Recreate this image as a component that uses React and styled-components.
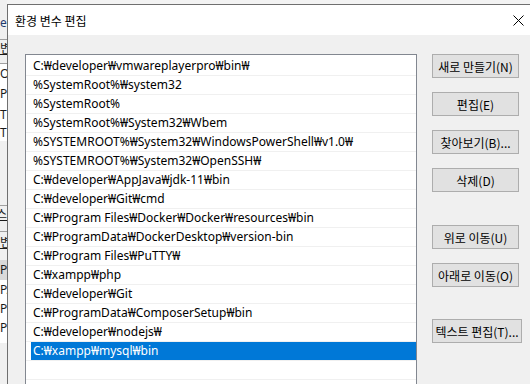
import React from "react";
import styled, { createGlobalStyle } from "styled-components";

const GlobalStyle = createGlobalStyle`
  html, body {
    margin: 0;
    padding: 0;
    background: #f3f3f3;
    font-family: "Noto Sans", "Noto Sans CJK KR", sans-serif;
  }
`;

const Screen = styled.div`
  width: 530px;
  height: 384px;
  display: flex;
  overflow: hidden;
  background: #f3f3f3;
`;

const BackWindow = styled.div`
  width: 7px;
  flex-shrink: 0;
  display: flex;
  flex-direction: column;
  overflow: hidden;
  background: #f0f0f0;
  font-size: 12px;
  color: #1a1a1a;
`;

const BackLine = styled.div`
  height: ${(p) => p.$h}px;
  line-height: ${(p) => p.$h}px;
  flex-shrink: 0;
  white-space: nowrap;
  box-sizing: border-box;
  background: ${(p) => p.$bg || "transparent"};
  border-bottom: ${(p) => (p.$rule ? "1px solid #a0a0a0" : "none")};
  text-decoration: ${(p) => (p.$under ? "underline" : "none")};
  color: ${(p) => p.$color || "inherit"};
  margin-left: ${(p) => p.$shift || 0}px;
`;

const Dialog = styled.div`
  width: 533px;
  flex-shrink: 0;
  margin-top: 4px;
  border-top: 1px solid #6f6f6f;
  border-left: 1px solid #6f6f6f;
  background: #f0f0f0;
  display: flex;
  flex-direction: column;
`;

const TitleBar = styled.div`
  height: 30px;
  background: #ffffff;
  display: flex;
  align-items: center;
  justify-content: space-between;
  padding-left: 7px;
`;

const Title = styled.span`
  font-family: "Noto Sans CJK KR", sans-serif;
  font-size: 12px;
  color: #000;
`;

const CloseButton = styled.div`
  width: 46px;
  height: 30px;
  flex-shrink: 0;
  display: flex;
  align-items: center;
  justify-content: center;
`;

const Body = styled.div`
  flex: 1;
  display: flex;
  align-items: flex-start;
  padding: 19px 0 0 17px;
`;

const ListBox = styled.div`
  width: 390px;
  height: 340px;
  border: 1px solid #828790;
  background: #ffffff;
  padding-top: 2px;
  flex-shrink: 0;
`;

const Row = styled.div`
  height: 18px;
  border-bottom: 1px solid #f0f0f0;
`;

const Cell = styled.div`
  height: 18px;
  margin-left: 5px;
  padding-left: 2px;
  line-height: 18px;
  font-size: 12px;
  white-space: nowrap;
  color: ${(p) => (p.$selected ? "#ffffff" : "#000000")};
  background: ${(p) => (p.$selected ? "#0078d7" : "transparent")};
`;

const ButtonColumn = styled.div`
  display: flex;
  flex-direction: column;
  margin-left: 15px;
`;

const Button = styled.div`
  width: ${(p) => p.$w || 85}px;
  height: 22px;
  margin-top: ${(p) => p.$gap || 0}px;
  border: 1px solid #adadad;
  background: #e1e1e1;
  display: flex;
  align-items: center;
  justify-content: center;
  font-family: "Noto Sans CJK KR", sans-serif;
  font-size: 12px;
  color: #000;
  white-space: nowrap;
`;

const paths = [
  "C:₩developer₩vmwareplayerpro₩bin₩",
  "%SystemRoot%₩system32",
  "%SystemRoot%",
  "%SystemRoot%₩System32₩Wbem",
  "%SYSTEMROOT%₩System32₩WindowsPowerShell₩v1.0₩",
  "%SYSTEMROOT%₩System32₩OpenSSH₩",
  "C:₩developer₩AppJava₩jdk-11₩bin",
  "C:₩developer₩Git₩cmd",
  "C:₩Program Files₩Docker₩Docker₩resources₩bin",
  "C:₩ProgramData₩DockerDesktop₩version-bin",
  "C:₩Program Files₩PuTTY₩",
  "C:₩xampp₩php",
  "C:₩developer₩Git",
  "C:₩ProgramData₩ComposerSetup₩bin",
  "C:₩developer₩nodejs₩",
  "C:₩xampp₩mysql₩bin",
  "",
];

const buttons = [
  { label: "새로 만들기(N)", gap: 0 },
  { label: "편집(E)", gap: 14 },
  { label: "찾아보기(B)...", gap: 14 },
  { label: "삭제(D)", gap: 14 },
  { label: "위로 이동(U)", gap: 33 },
  { label: "아래로 이동(O)", gap: 14 },
  { label: "텍스트 편집(T)...", gap: 32, w: 88 },
];

// the window behind the dialog, only its left sliver shows
const backLines = [
  { h: 14 },
  { h: 18, text: "er", color: "#1f3b6e" },
  { h: 8, rule: true },
  { h: 18, text: "변", under: true },
  { h: 6, rule: true },
  { h: 19, text: "Or", bg: "#ffffff" },
  { h: 22, text: "Pa", bg: "#ffffff" },
  { h: 19, text: "TE", bg: "#ffffff" },
  { h: 17, text: "TN", bg: "#ffffff" },
  { h: 59 },
  { h: 6, rule: true },
  { h: 18, text: "스", under: true, shift: -4 },
  { h: 8, rule: true },
  { h: 22, text: "변", under: true },
  { h: 6 },
  { h: 20, text: "Pa", bg: "#d9d9d9" },
  { h: 19, text: "PA", bg: "#ffffff" },
  { h: 19, text: "PR", bg: "#ffffff" },
  { h: 19, text: "PR", bg: "#ffffff" },
  { h: 6, bg: "#ffffff" },
];

export default function App() {
  return (
    <>
      <GlobalStyle />
      <Screen>
        <BackWindow>
          {backLines.map((l, i) => (
            <BackLine
              key={i}
              $h={l.h}
              $bg={l.bg}
              $rule={l.rule}
              $under={l.under}
              $color={l.color}
              $shift={l.shift}
            >
              {l.text}
            </BackLine>
          ))}
        </BackWindow>
        <Dialog>
          <TitleBar>
            <Title>환경 변수 편집</Title>
            <CloseButton>
              <svg width="11" height="11" viewBox="0 0 11 11">
                <path d="M0.5 0.5L10.5 10.5M10.5 0.5L0.5 10.5" stroke="#000" strokeWidth="1" />
              </svg>
            </CloseButton>
          </TitleBar>
          <Body>
            <ListBox>
              {paths.map((p, i) => (
                <Row key={i}>
                  <Cell $selected={i === 15}>{p}</Cell>
                </Row>
              ))}
            </ListBox>
            <ButtonColumn>
              {buttons.map((b) => (
                <Button key={b.label} $gap={b.gap} $w={b.w}>
                  {b.label}
                </Button>
              ))}
            </ButtonColumn>
          </Body>
        </Dialog>
      </Screen>
    </>
  );
}
